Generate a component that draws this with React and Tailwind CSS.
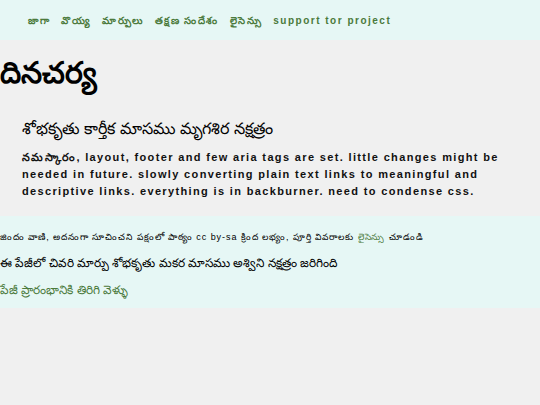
export default function App() {
  const nav = ["జాగా", "వొయ్య", "మార్పులు", "తక్షణ సందేశం", "లైసెన్సు", "support tor project"];
  return (
    <div className="min-h-[405px] bg-[#f0f0f0] text-black font-['Liberation_Sans',sans-serif]">
      <header className="bg-[#e6f7f5] h-[40px] flex items-center pl-[28px]">
        <nav className="flex gap-[11px] text-[10px] font-bold tracking-[1.5px] text-[#4b7a3c]">
          {nav.map((n) => (
            <a key={n} href="#">{n}</a>
          ))}
        </nav>
      </header>
      <main className="pb-[16px]">
        <h1 className="text-[30px] font-bold leading-none pt-[18px] pb-[22px]">దినచర్య</h1>
        <div className="px-[22px]">
          <h2 className="text-[16px] font-normal mt-[7px]">శోభకృతు కార్తీక మాసము మృగశిర నక్షత్రం</h2>
          <p className="mt-[8px] text-[11px] font-bold tracking-[1.35px] leading-[17px] text-[#111]">
            నమస్కారం, layout, footer and few aria tags are set. little changes might be needed in future. slowly converting plain text links to meaningful and descriptive links. everything is in backburner. need to condense css.
          </p>
        </div>
      </main>
      <footer className="bg-[#e6f7f5] pt-[15px] pb-[9px] flex flex-col gap-[9px]">
        <p className="text-[9px] tracking-[0.95px]">
          జిందం వాణి, అదనంగా సూచించని పక్షంలో పాఠ్యం cc by-sa క్రింద లభ్యం, పూర్తి వివరాలకు <a href="#" className="text-[#4b7a3c]">లైసెన్సు</a> చూడండి
        </p>
        <p className="text-[12px]">ఈ పేజీలో చివరి మార్పు శోభకృతు మకర మాసము అశ్విని నక్షత్రం జరిగింది</p>
        <a href="#" className="text-[12px] text-[#4b7a3c]">పేజీ ప్రారంభానికి తిరిగి వెళ్ళు</a>
      </footer>
    </div>
  );
}
